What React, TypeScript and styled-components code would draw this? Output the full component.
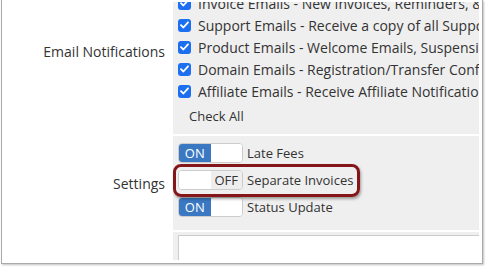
import React from 'react';
import styled, { createGlobalStyle } from 'styled-components';

const GlobalStyle = createGlobalStyle`
  html, body {
    margin: 0;
    padding: 0;
    background: #ffffff;
    font-family: "Open Sans", "Liberation Sans", sans-serif;
    color: #333333;
  }
`;

const Page = styled.div`
  width: 485px;
  height: 267px;
  padding-left: 1px;
  box-sizing: border-box;
  overflow: hidden;
`;

const Frame = styled.div`
  width: 482px;
  height: 264px;
  box-sizing: border-box;
  padding: 2px 3px 3px 1px;
  background: #ffffff;
  border: 1px solid #a9a9a9;
  border-top: none;
  box-shadow: 1px 1px 2px rgba(0, 0, 0, 0.25);
`;

const Viewport = styled.div`
  height: 100%;
  overflow: hidden;
`;

const Grid = styled.div`
  display: grid;
  grid-template-columns: 170px 1fr;
  row-gap: 2px;
  margin-top: -34px;
`;

const Label = styled.div`
  display: flex;
  align-items: center;
  justify-content: flex-end;
  padding-right: 8px;
  font-size: 14px;
  color: #333333;
  white-space: nowrap;
`;

const Field = styled.div<{ $pt: number; $pb: number }>`
  position: relative;
  background: #efefef;
  padding: ${(p) => p.$pt}px 0 ${(p) => p.$pb}px 5px;
  min-width: 0;
`;

const CheckRow = styled.label`
  display: flex;
  align-items: center;
  gap: 7px;
  height: 22px;
  font-size: 14px;
  white-space: nowrap;
  color: #333333;
`;

const Box = styled.span`
  flex: none;
  width: 13px;
  height: 13px;
  border-radius: 3px;
  background: #1b6ff0;
  display: flex;
  align-items: center;
  justify-content: center;
`;

const CheckAll = styled.button`
  display: block;
  height: 20px;
  margin: 4px 0 0 6px;
  padding: 0 5px;
  border: none;
  background: transparent;
  font-family: inherit;
  font-size: 13px;
  color: #333333;
`;

const ToggleRow = styled.div`
  display: flex;
  align-items: center;
  gap: 4px;
  height: 27px;
  font-size: 13px;
  white-space: nowrap;
`;

const Switch = styled.div`
  display: flex;
  width: 65px;
  height: 20px;
  box-sizing: border-box;
  border: 1px solid #cccccc;
  border-radius: 4px;
  overflow: hidden;
  background: #ffffff;
`;

const Half = styled.span<{ $kind: 'on' | 'off' | 'blank' }>`
  flex: 1;
  display: flex;
  align-items: center;
  justify-content: center;
  font-size: 13px;
  background: ${(p) => (p.$kind === 'on' ? '#3a78c2' : p.$kind === 'off' ? '#eeeeee' : '#ffffff')};
  color: ${(p) => (p.$kind === 'on' ? '#ffffff' : '#333333')};
`;

const Callout = styled.div`
  position: absolute;
  left: 0;
  top: 28px;
  width: 187px;
  height: 33px;
  box-sizing: border-box;
  border: 3px solid #84161a;
  border-radius: 8px;
  box-shadow: 1px 2px 3px rgba(0, 0, 0, 0.35);
  pointer-events: none;
`;

const TextBox = styled.div`
  height: 60px;
  margin-right: -20px;
  background: #ffffff;
  border: 1px solid #cccccc;
`;

const emails = [
  'General Emails - All account related emails',
  'Invoice Emails - New Invoices, Reminders, & Late Notices',
  'Support Emails - Receive a copy of all Support Ticket Communications',
  'Product Emails - Welcome Emails, Suspensions & Other Lifecycle Notifications',
  'Domain Emails - Registration/Transfer Confirmation & Renewal Notices',
  'Affiliate Emails - Receive Affiliate Notifications',
];

const settings = [
  { label: 'Late Fees', on: true },
  { label: 'Separate Invoices', on: false },
  { label: 'Status Update', on: true },
];

function Check() {
  return (
    <Box>
      <svg width="9" height="8" viewBox="0 0 9 8">
        <path d="M1 4.2 L3.4 6.5 L8 1.3" fill="none" stroke="#fff" strokeWidth="1.8" strokeLinecap="round" strokeLinejoin="round" />
      </svg>
    </Box>
  );
}

function Toggle({ on }: { on: boolean }) {
  return (
    <Switch>
      {on ? (
        <>
          <Half $kind="on">ON</Half>
          <Half $kind="blank" />
        </>
      ) : (
        <>
          <Half $kind="blank" />
          <Half $kind="off">OFF</Half>
        </>
      )}
    </Switch>
  );
}

export default function App() {
  return (
    <>
      <GlobalStyle />
      <Page>
        <Frame>
          <Viewport>
            <Grid>
              <Label>Email Notifications</Label>
              <Field $pt={2} $pb={8}>
                {emails.map((e) => (
                  <CheckRow key={e}>
                    <Check />
                    {e}
                  </CheckRow>
                ))}
                <CheckAll>Check All</CheckAll>
              </Field>

              <Label>Settings</Label>
              <Field $pt={3} $pb={10}>
                {settings.map((s) => (
                  <ToggleRow key={s.label}>
                    <Toggle on={s.on} />
                    {s.label}
                  </ToggleRow>
                ))}
                <Callout />
              </Field>

              <Label />
              <Field $pt={3} $pb={0}>
                <TextBox />
              </Field>
            </Grid>
          </Viewport>
        </Frame>
      </Page>
    </>
  );
}
